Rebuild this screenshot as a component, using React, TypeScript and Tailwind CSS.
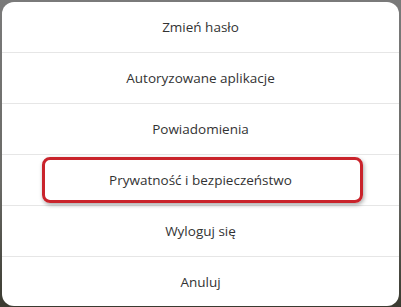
import React from "react";

const items = [
  "Zmień hasło",
  "Autoryzowane aplikacje",
  "Powiadomienia",
  "Prywatność i bezpieczeństwo",
  "Wyloguj się",
  "Anuluj",
];

export default function App() {
  return (
    <div
      className="w-[401px] h-[307px] overflow-hidden bg-[linear-gradient(to_bottom,#7a7a7a,#6a6a66_60%,#3a3a30)] pl-[2px] pr-[2px] pt-[2px]"
      style={{ fontFamily: '"Open Sans", "Noto Sans", sans-serif' }}
    >
      <div className="w-[397px] h-[304px] bg-white rounded-[12px] flex flex-col overflow-hidden">
        {items.map((label, i) => (
          <div
            key={label}
            className={
              "relative h-[51px] shrink-0 flex items-center justify-center text-[13.5px] text-[#333333] " +
              (i < items.length - 1 ? "border-b border-[#e6e6e6]" : "")
            }
          >
            {i === 3 && (
              <div className="absolute left-[40px] right-[36px] top-[2px] bottom-[2px] rounded-[8px] border-[3px] border-[#c9232b] shadow-[1px_2px_4px_rgba(0,0,0,0.35)]" />
            )}
            <span className="relative">{label}</span>
          </div>
        ))}
      </div>
    </div>
  );
}
